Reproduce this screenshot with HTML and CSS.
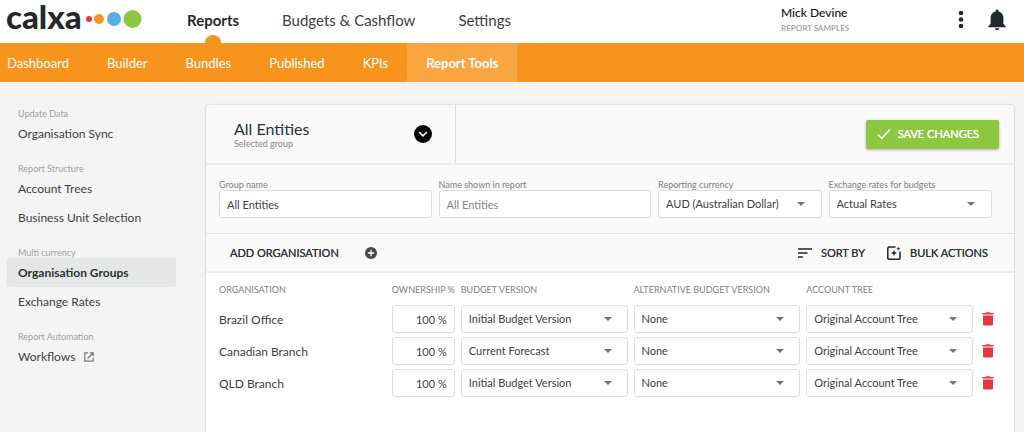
FILE: index.html
```html
<!DOCTYPE html>
<html lang="en">
<head>
<meta charset="utf-8">
<meta name="viewport" content="width=device-width, initial-scale=1">
<title>Organisation Groups – Calxa</title>
<link rel="stylesheet" href="styles.css">
</head>
<body>
<svg class="sprite" aria-hidden="true">
  <symbol id="trash" viewBox="0 0 12 14"><path d="M1 3.600h10v8.400c0 1-.6 1.600-1.600 1.600H2.600C1.600 13.600 1 13 1 12zM.5 1H3.600L4.300.2h3.400L8.400 1h3.100v1.500H.5z"/></symbol>
</svg>
<header class="topbar">
  <a class="logo" href="#">
    <span class="logo-word">calxa</span>
    <svg class="logo-dots" width="56" height="20" viewBox="0 0 56 20" aria-hidden="true"><circle cx="3" cy="10" r="3" fill="#e8373e"/><circle cx="13" cy="10" r="5" fill="#f7941e"/><circle cx="28" cy="10" r="7" fill="#56b0e4"/><circle cx="46.500" cy="10" r="9" fill="#8dc63f"/></svg>
  </a>
  <nav class="main-nav" aria-label="Main">
    <a class="active" href="#">Reports</a>
    <a href="#">Budgets &amp; Cashflow</a>
    <a href="#">Settings</a>
  </nav>
  <div class="account">
    <div class="account-name">Mick Devine</div>
    <div class="account-org">REPORT SAMPLES</div>
  </div>
  <button class="icon-button" type="button" aria-label="More">
    <svg width="6" height="20" viewBox="0 0 6 20"><circle cx="3" cy="3" r="2.300"/><circle cx="3" cy="9.500" r="2.300"/><circle cx="3" cy="16" r="2.300"/></svg>
  </button>
  <button class="icon-button" type="button" aria-label="Notifications">
    <svg width="18" height="22" viewBox="0 0 18 22"><path d="M9 .5c.9 0 1.500.6 1.500 1.500v.4c3 .7 4.900 3 4.900 6.200v6.200l2.300 2.600v.8H.3v-.8l2.300-2.600V8.600c0-3.200 1.900-5.500 4.900-6.200V2C7.500 1.100 8.100.5 9 .5zM6.800 19.200h4.400c-.2 1.200-1 2-2.200 2s-2-.8-2.200-2z"/></svg>
  </button>
</header>
<nav class="sub-nav" aria-label="Reports">
  <a href="#">Dashboard</a>
  <a href="#">Builder</a>
  <a href="#">Bundles</a>
  <a href="#">Published</a>
  <a href="#">KPIs</a>
  <a class="active" href="#">Report Tools</a>
</nav>
<div class="page">
  <nav class="side-nav" aria-label="Report tools">
    <section>
      <h2>Update Data</h2>
      <a href="#">Organisation Sync</a>
    </section>
    <section>
      <h2>Report Structure</h2>
      <a href="#">Account Trees</a>
      <a href="#">Business Unit Selection</a>
    </section>
    <section>
      <h2>Multi currency</h2>
      <a class="active" href="#">Organisation Groups</a>
      <a href="#">Exchange Rates</a>
    </section>
    <section>
      <h2>Report Automation</h2>
      <a href="#">Workflows
        <svg width="10" height="10" viewBox="0 0 10 10" fill="none" stroke="#777" stroke-width="1.200" aria-hidden="true"><path d="M4 .8H.8v8.400h8.400V6M5.800.8h3.400v3.400M9 1 3.500 6.500"/></svg>
      </a>
    </section>
  </nav>
  <main class="panel">
    <div class="panel-head">
      <div class="group-picker">
        <div>
          <h1>All Entities</h1>
          <p>Selected group</p>
        </div>
        <button class="round-button" type="button" aria-label="Choose group">
          <svg width="18" height="18" viewBox="0 0 18 18"><circle cx="9" cy="9" r="9"/><path d="m5.200 7.200 3.800 3.600 3.800-3.600" fill="none" stroke="#fff" stroke-width="1.600"/></svg>
        </button>
      </div>
      <button class="save" type="button">
        <svg width="14" height="12" viewBox="0 0 14 12" fill="none" stroke="#fff" stroke-width="1.500" aria-hidden="true"><path d="m1 6.500 3.800 3.800L13 1.500"/></svg>
        SAVE CHANGES
      </button>
    </div>
    <form class="filters">
      <div class="field">
        <label for="group-name">Group name</label>
        <input class="control" id="group-name" type="text" value="All Entities">
      </div>
      <div class="field">
        <label for="report-name">Name shown in report</label>
        <input class="control" id="report-name" type="text" placeholder="All Entities">
      </div>
      <div class="field">
        <label for="currency">Reporting currency</label>
        <span class="select"><select class="control" id="currency"><option>AUD (Australian Dollar)</option></select></span>
      </div>
      <div class="field">
        <label for="rates">Exchange rates for budgets</label>
        <span class="select"><select class="control" id="rates"><option>Actual Rates</option></select></span>
      </div>
    </form>
    <div class="toolbar">
      <button class="tool add" type="button">ADD ORGANISATION
        <svg width="12" height="12" viewBox="0 0 12 12" aria-hidden="true"><circle cx="6" cy="6" r="6" fill="#3f4a4d"/><path d="M6 2.800v6.400M2.800 6h6.400" stroke="#fff" stroke-width="1.300"/></svg>
      </button>
      <button class="tool" type="button">
        <svg width="14" height="10" viewBox="0 0 14 10" aria-hidden="true"><path d="M0 1h14M0 5h9.500M0 9h4.800" stroke="#222" stroke-width="1.600"/></svg>
        SORT BY
      </button>
      <button class="tool" type="button">
        <svg width="14" height="14" viewBox="0 0 14 14" aria-hidden="true"><path d="M8.500 1H2C1.300 1 .8 1.500.8 2.200v9.800c0 .7.500 1.200 1.200 1.200h9.800c.7 0 1.200-.5 1.200-1.200V5.500" fill="none" stroke="#222" stroke-width="1.500"/><path d="m7 4 .9 2.100L10 7l-2.100.9L7 10l-.9-2.100L4 7l2.100-.9zM11.300.8l.6 1.300 1.300.6-1.300.6-.6 1.300-.6-1.300-1.300-.6 1.300-.6z" fill="#222"/></svg>
        BULK ACTIONS
      </button>
    </div>
    <div class="table-area">
      <table>
        <colgroup><col><col class="col-own"><col><col><col><col class="col-del"></colgroup>
        <thead>
          <tr><th scope="col">ORGANISATION</th><th scope="col">OWNERSHIP %</th><th scope="col">BUDGET VERSION</th><th scope="col">ALTERNATIVE BUDGET VERSION</th><th scope="col">ACCOUNT TREE</th><td></td></tr>
        </thead>
        <tbody>
          <tr>
            <th scope="row">Brazil Office</th>
            <td><input class="control percent" type="text" value="100 %" aria-label="Brazil Office ownership"></td>
            <td><span class="select"><select class="control" aria-label="Brazil Office budget version"><option>Initial Budget Version</option></select></span></td>
            <td><span class="select"><select class="control" aria-label="Brazil Office alternative budget version"><option>None</option></select></span></td>
            <td><span class="select"><select class="control" aria-label="Brazil Office account tree"><option>Original Account Tree</option></select></span></td>
            <td><button class="delete" type="button" aria-label="Delete Brazil Office"><svg width="12" height="14"><use href="#trash"/></svg></button></td>
          </tr>
          <tr>
            <th scope="row">Canadian Branch</th>
            <td><input class="control percent" type="text" value="100 %" aria-label="Canadian Branch ownership"></td>
            <td><span class="select"><select class="control" aria-label="Canadian Branch budget version"><option>Current Forecast</option></select></span></td>
            <td><span class="select"><select class="control" aria-label="Canadian Branch alternative budget version"><option>None</option></select></span></td>
            <td><span class="select"><select class="control" aria-label="Canadian Branch account tree"><option>Original Account Tree</option></select></span></td>
            <td><button class="delete" type="button" aria-label="Delete Canadian Branch"><svg width="12" height="14"><use href="#trash"/></svg></button></td>
          </tr>
          <tr>
            <th scope="row">QLD Branch</th>
            <td><input class="control percent" type="text" value="100 %" aria-label="QLD Branch ownership"></td>
            <td><span class="select"><select class="control" aria-label="QLD Branch budget version"><option>Initial Budget Version</option></select></span></td>
            <td><span class="select"><select class="control" aria-label="QLD Branch alternative budget version"><option>None</option></select></span></td>
            <td><span class="select"><select class="control" aria-label="QLD Branch account tree"><option>Original Account Tree</option></select></span></td>
            <td><button class="delete" type="button" aria-label="Delete QLD Branch"><svg width="12" height="14"><use href="#trash"/></svg></button></td>
          </tr>
        </tbody>
      </table>
    </div>
  </main>
</div>
</body>
</html>
```

FILE: styles.css
```css
* { box-sizing: border-box; }
body {
  margin: 0;
  min-height: 100vh;
  display: flex;
  flex-direction: column;
  background: #f4f4f4;
  color: #3a3f41;
  font: 12px/16px Lato, "Liberation Sans", sans-serif;
}
h1, h2, p { margin: 0; font-weight: 400; }
a { color: inherit; text-decoration: none; }
button, input, select { font: inherit; color: inherit; }
button { padding: 0; border: 0; background: none; cursor: pointer; }
svg { display: block; flex: none; }
.sprite { position: absolute; width: 0; height: 0; }

.topbar {
  display: flex;
  align-items: center;
  height: 43px;
  padding-right: 18px;
  background: #fff;
}
.logo {
  display: flex;
  align-items: center;
  gap: 4px;
  width: 187px;
  padding: 0 0 5px 6px;
  color: #1f2a2e;
}
.logo-word { font-size: 33px; line-height: 32px; font-weight: 900; padding-bottom: 6px; }
.main-nav { display: flex; flex: 1; gap: 43px; align-self: stretch; font-size: 15px; }
.main-nav a { position: relative; display: flex; align-items: center; padding-bottom: 3px; }
.main-nav .active { font-weight: 700; color: #1f2a2e; }
.main-nav .active::after {
  content: "";
  position: absolute;
  left: 50%;
  bottom: 0;
  width: 16px;
  height: 8px;
  margin-left: -8px;
  border-radius: 8px 8px 0 0;
  background: #f7941e;
}
.account { width: 177px; padding-bottom: 4px; }
.account-name { font-size: 12px; line-height: 16px; font-weight: 500; color: #111; }
.account-org { font-size: 8px; line-height: 14px; font-weight: 700; color: #a6a6a6; }
.icon-button { margin-bottom: 4px; fill: #1f2a2e; }
.icon-button + .icon-button { margin-left: 24px; }

.sub-nav { display: flex; height: 39px; background: #f7941e; color: #fff; font-size: 13px; }
.sub-nav a { display: flex; align-items: center; padding: 0 19px; }
.sub-nav a:first-child { padding-left: 7px; }
.sub-nav .active { background: #f9a540; font-weight: 700; }

.page { display: flex; flex: 1; padding-right: 10px; }
.side-nav { flex: none; width: 206px; padding: 26px 30px 0 7px; }
.side-nav section { margin-bottom: 15px; }
.side-nav h2 { padding-left: 11px; font-size: 9px; line-height: 11px; color: #a0a0a0; }
.side-nav a {
  display: flex;
  align-items: center;
  gap: 9px;
  height: 29px;
  padding-left: 11px;
  border-radius: 2px;
  font-size: 12px;
}
.side-nav .active { background: #e4e7e6; font-weight: 700; color: #2b3133; }

.panel {
  flex: 1;
  min-width: 0;
  display: flex;
  flex-direction: column;
  margin-top: 23px;
  border-radius: 3px 3px 0 0;
  background: #f9f9f9;
  box-shadow: 0 0 2px rgba(0, 0, 0, .3);
}
.panel-head {
  display: flex;
  align-items: center;
  justify-content: space-between;
  height: 60px;
  padding-right: 15px;
  border-bottom: 2px solid #ececec;
}
.group-picker {
  display: flex;
  align-items: center;
  justify-content: space-between;
  align-self: stretch;
  width: 250px;
  padding: 0 23px 0 28px;
  border-right: 1px solid #ddd;
}
.group-picker h1 { font-size: 16px; line-height: 20px; color: #2b3133; }
.group-picker p { font-size: 9px; line-height: 10px; color: #888; }
.save {
  display: flex;
  align-items: center;
  gap: 7px;
  height: 29px;
  padding: 0 20px 0 11px;
  border-radius: 2px;
  background: #8dc63f;
  box-shadow: 0 1px 3px rgba(0, 0, 0, .3);
  color: #fff;
  font-size: 11px;
  text-shadow: 0 0 currentColor;
}

.filters {
  display: grid;
  grid-template-columns: 13fr 13fr 10fr 10fr;
  gap: 7px;
  padding: 14px 22px 15px 13px;
  border-bottom: 1px solid #e2e2e2;
}
.field { min-width: 0; }
.field label { display: block; font-size: 9px; line-height: 11px; color: #808080; }
.control {
  display: block;
  width: 100%;
  height: 28px;
  margin: 0;
  padding: 0 7px;
  border: 1px solid #dedede;
  border-radius: 3px;
  background: #fff;
  appearance: none;
  font-size: 11px;
}
.control::placeholder { color: #858585; opacity: 1; }
.select { position: relative; display: block; }
.select::after {
  content: "";
  position: absolute;
  right: 17px;
  top: 12px;
  border: 4px solid transparent;
  border-top-color: #757575;
  border-bottom: 0;
  pointer-events: none;
}

.toolbar {
  display: flex;
  align-items: center;
  gap: 22px;
  height: 39px;
  padding: 0 26px 0 24px;
  border-bottom: 2px solid #ececec;
}
.tool {
  display: flex;
  align-items: center;
  gap: 9px;
  color: #33393b;
  font-size: 11px;
  text-shadow: 0 0 currentColor;
}
.tool.add { gap: 26px; margin-right: auto; }

.table-area { flex: 1; padding: 9px 0 0 13px; background: #fff; }
table { width: 100%; table-layout: fixed; border-collapse: collapse; }
.col-own { width: 69px; }
.col-del { width: 35px; }
th { padding: 0; text-align: left; font-weight: 400; white-space: nowrap; }
td { padding: 0 6px 4px 0; }
thead th { height: 23px; padding-bottom: 7px; font-size: 9px; line-height: 12px; color: #808080; }
tbody th { padding-bottom: 3px; font-size: 12px; }
td .select::after { right: 16px; }
.percent { text-align: right; }
.delete { display: block; margin-left: 3px; fill: #e8383b; }
```
